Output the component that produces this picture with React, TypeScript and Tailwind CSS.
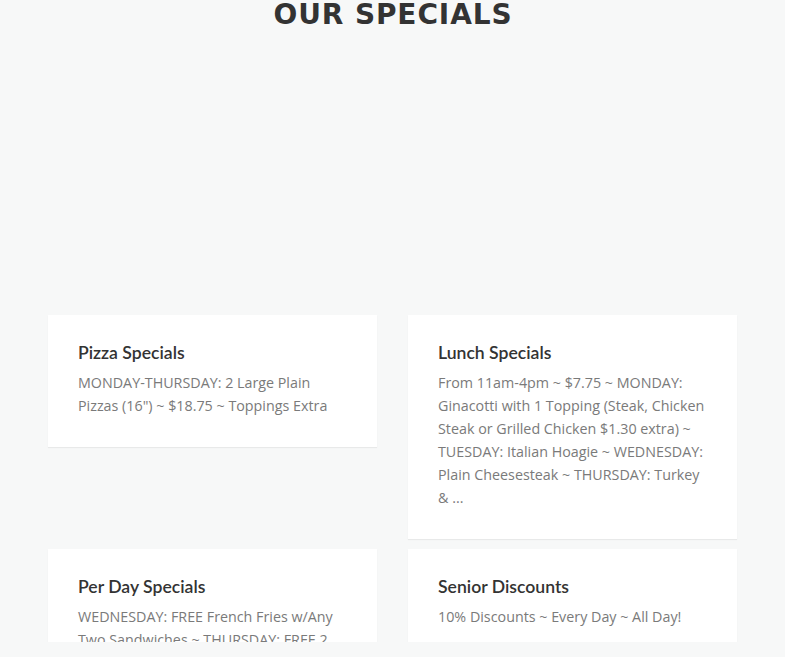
import React from "react";

interface Special {
  title: string;
  text: string;
}

const specials: Special[] = [
  {
    title: "Pizza Specials",
    text: 'MONDAY-THURSDAY: 2 Large Plain Pizzas (16") ~ $18.75 ~ Toppings Extra',
  },
  {
    title: "Lunch Specials",
    text: "From 11am-4pm ~ $7.75 ~ MONDAY: Ginacotti with 1 Topping (Steak, Chicken Steak or Grilled Chicken $1.30 extra) ~ TUESDAY: Italian Hoagie ~ WEDNESDAY: Plain Cheesesteak ~ THURSDAY: Turkey & ...",
  },
  {
    title: "Per Day Specials",
    text: "WEDNESDAY: FREE French Fries w/Any Two Sandwiches ~ THURSDAY: FREE 2 Liter Soda w/Any Large Pizza ~ ...",
  },
  {
    title: "Senior Discounts",
    text: "10% Discounts ~ Every Day ~ All Day!",
  },
];

const SpecialCard: React.FC<Special> = ({ title, text }) => (
  <div className="bg-white pt-[28px] pb-[30px] px-[30px] shadow-[0_1px_1px_rgba(0,0,0,0.06)] mb-[10px]">
    <h3
      className="text-[17.6px] leading-[20px] font-semibold text-[#333] mb-[8px]"
      style={{ fontFamily: "Lato, 'Open Sans', sans-serif" }}
    >
      {title}
    </h3>
    <p
      className="text-[14.3px] leading-[23px] text-[#7a7a7a]"
      style={{ fontFamily: "'Open Sans', sans-serif" }}
    >
      {text}
    </p>
  </div>
);

export default function App() {
  return (
    <div className="min-h-screen bg-[#f7f8f8]">
      <div className="h-[642px] overflow-hidden">
        <h2
          className="text-center text-[28px] leading-[30px] font-bold tracking-[0.9px] text-[#333] pl-[1px]"
          style={{ fontFamily: "'DejaVu Sans', sans-serif" }}
        >
          OUR SPECIALS
        </h2>
        <div className="h-[285px]" />
        <div className="grid grid-cols-2 gap-x-[31px] items-start px-[48px]">
          {specials.map((s) => (
            <SpecialCard key={s.title} title={s.title} text={s.text} />
          ))}
        </div>
      </div>
    </div>
  );
}
